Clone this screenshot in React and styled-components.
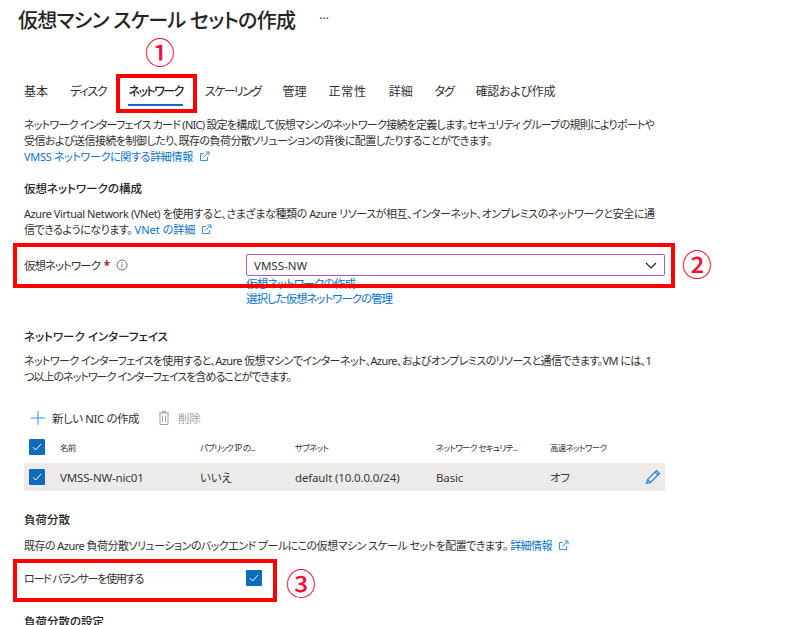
import React from 'react';
import styled, { createGlobalStyle } from 'styled-components';

const Global = createGlobalStyle`
  html, body {
    margin: 0;
    padding: 0;
    background: #fff;
  }
  body {
    font-family: 'Noto Sans', 'Noto Sans CJK JP', sans-serif;
    font-feature-settings: 'palt';
    color: #323130;
    font-size: 11.5px;
  }
`;

const Page = styled.div`
  position: relative;
  width: 800px;
  height: 625px;
  overflow: hidden;
  padding: 0 135px 0 24px;
  box-sizing: border-box;
`;

const TitleBar = styled.header`
  display: flex;
  align-items: center;
  height: 38px;
  margin-left: -6px;
  gap: 24px;
`;

const Title = styled.h1`
  margin: 0;
  font-size: 20px;
  font-weight: 500;
  letter-spacing: -0.7px;
  color: #252423;
`;

const More = styled.span`
  font-size: 12px;
  color: #323130;
  margin-top: -2px;
`;

const Tabs = styled.nav`
  display: flex;
  height: 37px;
  margin-top: 42px;
  gap: 22px;
`;

const Tab = styled.div`
  position: relative;
  height: 35px;
  line-height: 23px;
  font-size: 12px;
  white-space: nowrap;
  letter-spacing: ${(p) => p.$track || 0}px;
  font-weight: ${(p) => (p.$active ? 500 : 400)};
  color: ${(p) => (p.$active ? '#201f1e' : '#323130')};

  ${(p) =>
    p.$active &&
    `&::after {
      content: '';
      position: absolute;
      left: 0;
      right: 0;
      top: 24px;
      height: 2px;
      background: #0f6cbd;
    }`}
`;

const Para = styled.div`
  margin-top: ${(p) => p.$top || 0}px;
  line-height: 16px;
  font-size: 11px;
  white-space: nowrap;
  color: #323130;
`;

const Line = styled.div`
  letter-spacing: ${(p) => p.$track || 0}px;
`;

const Heading = styled.h2`
  margin: ${(p) => p.$top || 0}px 0 0;
  height: 16px;
  line-height: 16px;
  font-size: 11.5px;
  font-weight: 500;
  color: #252423;
`;

const Link = styled.a`
  color: #0a72c8;
  white-space: nowrap;
  display: ${(p) => (p.$block ? 'block' : 'inline')};
  letter-spacing: ${(p) => (p.$track === undefined ? 'inherit' : `${p.$track}px`)};
`;

const ExternalIcon = styled.svg`
  width: 11px;
  height: 11px;
  margin-left: 6px;
  vertical-align: -1px;
  fill: none;
  stroke: #3a8fd8;
  stroke-width: 1;
`;

const External = () => (
  <ExternalIcon viewBox="0 0 11 11">
    <path d="M5 2.5H1.5v7h7V6" />
    <path d="M4.5 6.5 9.5 1.5M6.5 1H10v3.5" />
  </ExternalIcon>
);

const Field = styled.div`
  display: grid;
  grid-template-columns: 222px 419px;
  margin-top: 16px;
`;

const FieldLabel = styled.div`
  display: flex;
  align-items: center;
  height: 22px;
  gap: 7px;
  letter-spacing: -1px;
  color: #323130;
`;

const Star = styled.span`
  color: #a4262c;
  font-weight: 700;
  margin-left: -3px;
`;

const InfoIcon = styled.svg`
  width: 12px;
  height: 12px;
  fill: none;
  stroke: #605e5c;
  stroke-width: 0.9;
`;

const Select = styled.div`
  display: flex;
  align-items: center;
  justify-content: space-between;
  height: 22px;
  box-sizing: border-box;
  border: 1px solid #a55dc2;
  border-radius: 2px;
  padding: 0 7px;
  font-size: 11.5px;
  color: #323130;
`;

const Chevron = styled.svg`
  width: 12px;
  height: 7px;
  fill: none;
  stroke: #201f1e;
  stroke-width: 1.1;
`;

const FieldLinks = styled.div`
  grid-column: 2;
  line-height: 15px;
  font-size: 11.5px;
`;

const Toolbar = styled.div`
  display: flex;
  align-items: center;
  height: 20px;
  margin: 23px 0 0 6px;
  font-size: 11.5px;
  letter-spacing: -0.45px;
`;

const ToolItem = styled.div`
  display: flex;
  align-items: center;
  gap: 6px;
  margin-right: 17px;
  color: ${(p) => (p.$disabled ? '#a19f9d' : '#323130')};
`;

const ToolIcon = styled.svg`
  width: 16px;
  height: 16px;
  fill: none;
  stroke: ${(p) => p.$color};
  stroke-width: 1;
`;

const GridRow = styled.div`
  display: grid;
  grid-template-columns: 36px 140px 95px 141px 114px 1fr 20px;
  align-items: center;
  height: ${(p) => (p.$header ? 32 : 28)}px;
  font-size: ${(p) => (p.$header ? 8.5 : 11.5)}px;
  letter-spacing: ${(p) => (p.$header ? -0.7 : -0.15)}px;
  color: ${(p) => (p.$header ? '#323130' : '#3b3a39')};
  background: ${(p) => (p.$header ? 'transparent' : '#edebe9')};
`;

const Table = styled.div`
  margin-top: 3px;
  width: 641px;
`;

const Check = styled.span`
  display: flex;
  align-items: center;
  justify-content: center;
  width: 16px;
  height: 16px;
  background: #0f6cbd;
  border-radius: 1px;
  margin-left: ${(p) => p.$left || 0}px;
`;

const CheckMark = styled.svg`
  width: 10px;
  height: 8px;
  fill: none;
  stroke: #fff;
  stroke-width: 1;
`;

const Checkbox = ({ left }) => (
  <Check $left={left}>
    <CheckMark viewBox="0 0 10 8">
      <path d="M1 4.2 3.6 7 9 1" />
    </CheckMark>
  </Check>
);

const PencilIcon = styled.svg`
  width: 16px;
  height: 16px;
  fill: none;
  stroke: #1b7fd6;
  stroke-width: 1.1;
`;

const CheckRow = styled.div`
  display: grid;
  grid-template-columns: 222px 16px;
  align-items: center;
  height: 16px;
  margin-top: 16px;
  font-size: 11px;
  letter-spacing: -1.2px;
`;

const Mark = styled.div`
  position: absolute;
  box-sizing: border-box;
  border: 4px solid #f00;
  left: ${(p) => p.$x}px;
  top: ${(p) => p.$y}px;
  width: ${(p) => p.$w}px;
  height: ${(p) => p.$h}px;
`;

const Num = styled.span`
  position: absolute;
  left: ${(p) => p.$x}px;
  top: ${(p) => p.$y}px;
  font-size: 30px;
  line-height: 30px;
  font-weight: 500;
  color: #f2103c;
  font-family: 'Noto Sans CJK JP', sans-serif;
`;

export default function App() {
  return (
    <Page>
      <Global />
      <TitleBar>
        <Title>仮想マシン スケール セットの作成</Title>
        <More>···</More>
      </TitleBar>
      <Tabs>
        <Tab>基本</Tab>
        <Tab $track={-1.2}>ディスク</Tab>
        <Tab $active $track={-1.5}>ネットワーク</Tab>
        <Tab $track={-1.6}>スケーリング</Tab>
        <Tab>管理</Tab>
        <Tab $track={0.7}>正常性</Tab>
        <Tab>詳細</Tab>
        <Tab $track={-1.2}>タグ</Tab>
        <Tab $track={-0.3}>確認および作成</Tab>
      </Tabs>
      <Para>
        <Line $track={-0.74}>
          ネットワーク インターフェイス カード (NIC) 設定を構成して仮想マシンのネットワーク接続を定義します。セキュリティ グループの規則によりポートや
        </Line>
        <Line $track={-0.53}>
          受信および送信接続を制御したり、既存の負荷分散ソリューションの背後に配置したりすることができます。
        </Line>
        <Line $track={-0.33}>
          <Link>VMSS ネットワークに関する詳細情報<External /></Link>
        </Line>
      </Para>
      <Heading $top={16}>仮想ネットワークの構成</Heading>
      <Para $top={9}>
        <Line $track={-0.42}>
          Azure Virtual Network (VNet) を使用すると、さまざまな種類の Azure リソースが相互、インターネット、オンプレミスのネットワークと安全に通
        </Line>
        <Line $track={-0.5}>
          信できるようになります。 <Link $track={0}>VNet の詳細<External /></Link>
        </Line>
      </Para>
      <Field>
        <FieldLabel>
          仮想ネットワーク <Star>*</Star>
          <InfoIcon viewBox="0 0 12 12">
            <circle cx="6" cy="6" r="5" />
            <path d="M6 5.2v3.4M6 3.2v1" />
          </InfoIcon>
        </FieldLabel>
        <Select>
          VMSS-NW
          <Chevron viewBox="0 0 12 7">
            <path d="M1 1 6 6 11 1" />
          </Chevron>
        </Select>
        <FieldLinks>
          <Link $block $track={-0.8}>仮想ネットワークの作成</Link>
          <Link $block $track={-1.05}>選択した仮想ネットワークの管理</Link>
        </FieldLinks>
      </Field>
      <Heading $top={23}>ネットワーク インターフェイス</Heading>
      <Para $top={8}>
        <Line $track={-0.6}>
          ネットワーク インターフェイスを使用すると、Azure 仮想マシンでインターネット、Azure、およびオンプレミスのリソースと通信できます。VM には、1
        </Line>
        <Line $track={-0.97}>つ以上のネットワーク インターフェイスを含めることができます。</Line>
      </Para>
      <Toolbar>
        <ToolItem>
          <ToolIcon viewBox="0 0 16 16" $color="#3a8fd8">
            <path d="M8 1v14M1 8h14" />
          </ToolIcon>
          新しい NIC の作成
        </ToolItem>
        <ToolItem $disabled>
          <ToolIcon viewBox="0 0 16 16" $color="#a19f9d">
            <path d="M3 3h10M6 3V1.5h4V3M4 3v11.5h8V3M6.5 5.5v6.5M9.5 5.5v6.5" />
          </ToolIcon>
          削除
        </ToolItem>
      </Toolbar>
      <Table>
        <GridRow $header>
          <Checkbox left={5} />
          <span>名前</span>
          <span>パブリック IP の...</span>
          <span>サブネット</span>
          <span>ネットワーク セキュリテ...</span>
          <span>高速ネットワーク</span>
        </GridRow>
        <GridRow>
          <Checkbox left={5} />
          <span>VMSS-NW-nic01</span>
          <span>いいえ</span>
          <span>default (10.0.0.0/24)</span>
          <span>Basic</span>
          <span>オフ</span>
          <PencilIcon viewBox="0 0 16 16">
            <path d="M1.5 14.5 2.5 10.5 11.5 1.5 14.5 4.5 5.5 13.5ZM2.5 10.5l3 3M10 3l3 3" />
          </PencilIcon>
        </GridRow>
      </Table>
      <Heading $top={21}>負荷分散</Heading>
      <Para $top={10}>
        <Line $track={-0.53}>
          既存の Azure 負荷分散ソリューションのバックエンド プールにこの仮想マシン スケール セットを配置できます。 <Link>詳細情報<External /></Link>
        </Line>
      </Para>
      <CheckRow>
        <span>ロード バランサーを使用する</span>
        <Checkbox />
      </CheckRow>
      <Heading $top={28}>負荷分散の設定</Heading>

      <Mark $x={116} $y={74} $w={81} $h={39} />
      <Mark $x={13} $y={243} $w={662} $h={45} />
      <Mark $x={13} $y={559} $w={264} $h={43} />
      <Num $x={145} $y={36}>①</Num>
      <Num $x={682} $y={248}>②</Num>
      <Num $x={286} $y={567}>③</Num>
    </Page>
  );
}
